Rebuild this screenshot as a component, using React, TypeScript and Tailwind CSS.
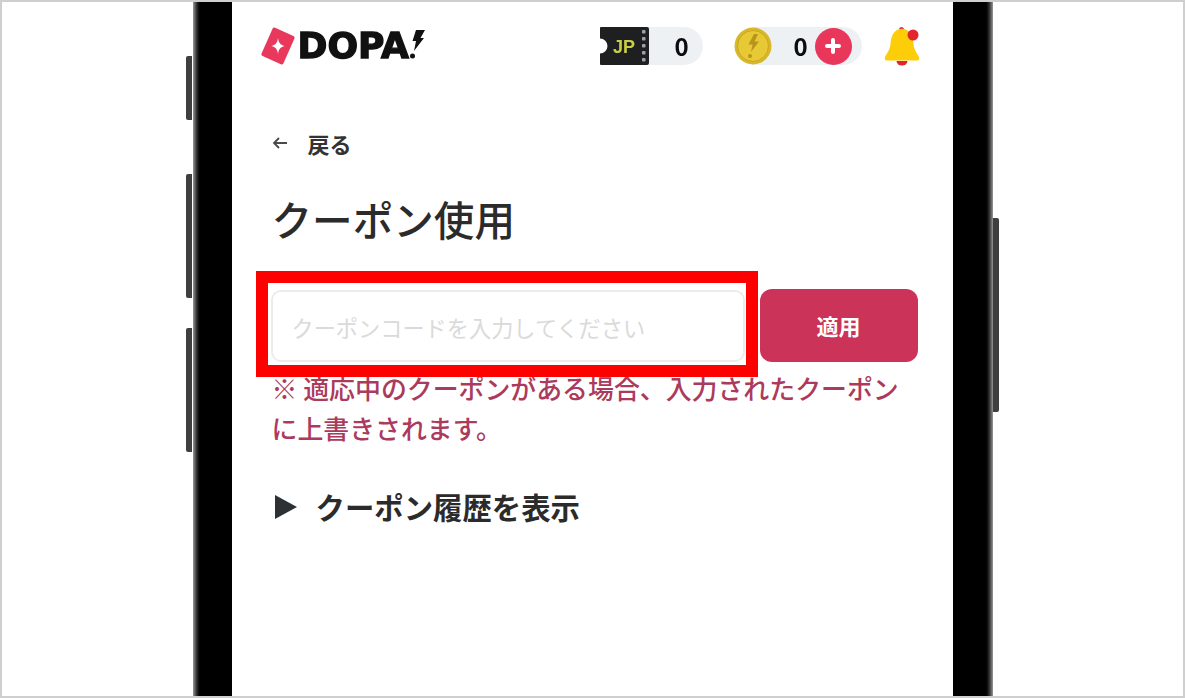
import React from "react";

const cjk = { fontFamily: '"Noto Sans CJK JP", "Noto Sans", sans-serif' };

function LogoMark() {
  return (
    <svg width="36" height="40" viewBox="0 0 36 40" className="shrink-0">
      <g transform="rotate(24 18 20)">
        <rect x="6" y="4.5" width="24" height="31" rx="2" fill="#e8395c" />
        <path d="M18 12 C18.8 17 20 18.6 24.5 20 C20 21.4 18.8 23 18 28 C17.2 23 16 21.4 11.5 20 C16 18.6 17.2 17 18 12 Z" fill="#fff" transform="rotate(-24 18 20)" />
      </g>
    </svg>
  );
}

function Ticket() {
  return (
    <svg width="49" height="38" viewBox="0 0 49 38" className="shrink-0 relative z-10">
      <path d="M1 0 H47 a2 2 0 0 1 2 2 V36 a2 2 0 0 1 -2 2 H1 a1 1 0 0 1 -1 -1 V26.5 a7.5 7.5 0 0 0 0 -15 V1 a1 1 0 0 1 1 -1 Z" fill="#1d1f20" />
      {[3, 10, 17, 24, 31].map((y) => (
        <rect key={y} x="42" y={y} width="3.5" height="3.5" rx="0.8" fill="#9ca3a5" />
      ))}
      <text x="13" y="26" fontFamily="Liberation Sans, sans-serif" fontWeight="700" fontSize="18" fill="#c9cf45">JP</text>
    </svg>
  );
}

function Coin() {
  return (
    <svg width="38" height="38" viewBox="0 0 38 38" className="shrink-0">
      <circle cx="19" cy="19" r="18.5" fill="#d8b82a" />
      <circle cx="19" cy="19" r="15.5" fill="#e6c935" stroke="#c9a71f" strokeWidth="1" />
      <path d="M20 7 L24 7 L20.5 14.5 L25 14.5 L17 25 L18.5 17.5 L14.5 17.5 Z" fill="#b8951a" />
      <circle cx="16" cy="29" r="2" fill="#b8951a" />
    </svg>
  );
}

function Bell() {
  return (
    <svg width="36" height="40" viewBox="0 0 36 40" className="shrink-0">
      <circle cx="17.5" cy="3.5" r="2.5" fill="#e8403a" />
      <path d="M12.5 35 a5.5 4.5 0 0 0 11 0 Z" fill="#e3262e" />
      <path d="M18 3 C9 3 7 11 6.5 18 C6 24 3 27 1 31 C0.4 33 1 34.5 3 34.5 H33 C35 34.5 35.6 33 35 31 C33 27 30 24 29.5 18 C29 11 27 3 18 3 Z" fill="#fdcd0a" />
      <circle cx="29" cy="9" r="5.5" fill="#e3262e" />
    </svg>
  );
}

export default function App() {
  return (
    <div className="relative w-[1185px] h-[698px] overflow-hidden bg-white border-2 border-[#cfcfcf] flex justify-center" style={cjk}>
      <div className="relative w-[800px] h-full flex bg-black pl-[39px] pr-[40px]">
        <div className="absolute left-[-7px] top-[54px] w-[6px] h-[64px] bg-[#3f3f3f] rounded-l-[2px]" />
        <div className="absolute left-[-7px] top-[172px] w-[6px] h-[124px] bg-[#3f3f3f] rounded-l-[2px]" />
        <div className="absolute left-[-7px] top-[326px] w-[6px] h-[124px] bg-[#3f3f3f] rounded-l-[2px]" />
        <div className="absolute right-[-6px] top-[216px] w-[6px] h-[194px] bg-[#3f3f3f] rounded-r-[2px]" />
        <div className="absolute left-0 top-0 bottom-0 w-[8px] bg-gradient-to-r from-[#9a9a9a] via-[#2a2a2a] to-black" />
        <div className="absolute right-0 top-0 bottom-0 w-[8px] bg-gradient-to-l from-[#9a9a9a] via-[#2a2a2a] to-black" />

        <main className="flex-1 bg-white pl-[40px] pr-[34px] flex flex-col min-w-0">
          <header className="flex items-center h-[38px] mt-[25px] [filter:blur(0.4px)]">
            <div className="flex items-center ml-[-12px]">
              <LogoMark />
              <span className="text-[36px] leading-none font-bold ml-[2px] text-[#111] [-webkit-text-stroke:1.4px_#111]" style={{ fontFamily: '"DejaVu Sans", sans-serif' }}>DOPA</span>
              <svg width="17" height="34" viewBox="0 0 17 34" className="mt-[-2px]">
                <path d="M7 2 H16 L11.5 10 H15 L5 23 L7 13 H3.5 Z" fill="#111" />
                <circle cx="3.5" cy="28" r="2.5" fill="#111" />
              </svg>
            </div>
            <div className="ml-auto flex items-center mr-[-1px]">
              <div className="flex items-center w-[103px] h-[38px] mr-[31px]">
                <Ticket />
                <div className="flex-1 h-[38px] ml-[-2px] rounded-r-full bg-[#edf1f4] flex items-center justify-center pl-[14px] text-[24px] font-bold text-[#0b0b14]">0</div>
              </div>
              <div className="relative flex items-center w-[128px] h-[38px] mr-[22px]">
                <div className="absolute inset-y-0 left-[18px] right-0 rounded-r-full bg-[#edf1f4]" />
                <div className="relative z-10 flex items-center w-full">
                  <Coin />
                  <span className="ml-[22px] w-[14px] text-[24px] font-bold text-[#0b0b14] leading-none">0</span>
                  <span className="ml-[7px] w-[37px] h-[37px] rounded-full bg-[#e8375a] text-white flex items-center justify-center">
                    <svg width="18" height="18" viewBox="0 0 18 18"><path d="M9 3 V15 M3 9 H15" stroke="#fff" strokeWidth="4" strokeLinecap="round" /></svg>
                  </span>
                </div>
              </div>
              <Bell />
            </div>
          </header>

          <div className="flex items-center mt-[60px] h-[36px] text-[#333]">
            <svg width="16" height="14" viewBox="0 0 16 14" className="shrink-0"><path d="M15 7 H2 M7 2 L2 7 L7 12" fill="none" stroke="#4a4a4a" strokeWidth="1.8" /></svg>
            <span className="ml-[20px] text-[22px] font-bold leading-none">戻る</span>
          </div>

          <h1 className="mt-[28px] text-[40.6px] font-medium leading-[60px] text-[#2b2b2b]">クーポン使用</h1>

          <div className="relative mt-[40px] flex items-center">
            <div className="w-[474px] h-[72px] ml-[-1px] rounded-[10px] border-2 border-[#ececec] bg-white flex items-center pl-[19px] pt-[4px] text-[22.2px] text-[#dadada]">
              クーポンコードを入力してください
            </div>
            <button className="ml-[15px] w-[158px] h-[73px] rounded-[12px] bg-[#cc3358] text-white font-bold text-[22px]">適用</button>
            <div className="absolute left-[-16px] top-[-18px] w-[502px] h-[106px] border-[12px] border-[#fe0000]" />
          </div>

          <p className="mt-[6px] text-[25.9px] font-medium leading-[40px] text-[#ab3a5c]">
            ※ 適応中のクーポンがある場合、入力されたクーポンに上書きされます。
          </p>

          <div className="flex items-center mt-[37px] h-[44px] text-[#2b2b2b]">
            <svg width="24" height="26" viewBox="0 0 24 26" className="shrink-0 ml-[2px]"><path d="M1 1 L23 13 L1 25 Z" fill="#2d3134" /></svg>
            <span className="ml-[18px] text-[29.4px] font-bold leading-none">クーポン履歴を表示</span>
          </div>
        </main>
      </div>
    </div>
  );
}
